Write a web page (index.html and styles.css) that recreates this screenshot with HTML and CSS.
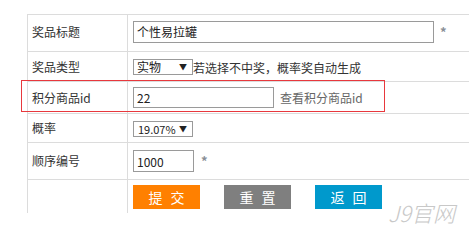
FILE: index.html
```html
<!DOCTYPE html>
<html lang="zh-CN">
<head>
<meta charset="utf-8">
<title>奖品编辑</title>
<link rel="stylesheet" href="styles.css">
</head>
<body>
<div class="page">
  <table class="form">
    <tr class="r1">
      <td class="lab">奖品标题</td>
      <td class="val"><input class="ipt w-title" type="text" value="个性易拉罐"><span class="req">*</span></td>
    </tr>
    <tr class="r2">
      <td class="lab">奖品类型</td>
      <td class="val"><span class="sel"><select><option>实物</option></select><span class="arrow">▼</span></span><span class="tip">若选择不中奖，概率奖自动生成</span></td>
    </tr>
    <tr class="r3">
      <td class="lab">积分商品id</td>
      <td class="val"><input class="ipt w-id" type="text" value="22"><a class="link">查看积分商品id</a></td>
    </tr>
    <tr class="r4">
      <td class="lab">概率</td>
      <td class="val"><span class="sel"><select class="num"><option>19.07%</option></select><span class="arrow">▼</span></span></td>
    </tr>
    <tr class="r5">
      <td class="lab">顺序编号</td>
      <td class="val"><input class="ipt w-num" type="text" value="1000"><span class="req req-num">*</span></td>
    </tr>
    <tr class="r6">
      <td class="lab"></td>
      <td class="val"><div class="btns"><button class="btn submit">提 交</button><button class="btn reset">重 置</button><button class="btn back">返 回</button></div></td>
    </tr>
  </table>
  <div class="mark"></div>
  <div class="watermark">J9官网</div>
</div>
</body>
</html>
```
FILE: styles.css
```css
html, body {
  margin: 0;
  padding: 0;
  background: #fff;
  overflow: hidden;
}
body {
  width: 469px;
  height: 232px;
  font-family: "Noto Sans CJK SC", sans-serif;
  font-size: 12px;
  color: #333;
}
.page {
  position: relative;
  padding: 14px 0 0 27px;
  height: 218px;
}
.form {
  border-collapse: separate;
  border-spacing: 0;
  width: 442px;
  table-layout: fixed;
}
.form td {
  border-top: 1px solid #dcdcdc;
  border-left: 1px solid #dcdcdc;
  padding: 0;
  vertical-align: middle;
  line-height: 16px;
}
.form td.lab {
  width: 95px;
  padding-left: 4px;
  white-space: nowrap;
}
.form td.val {
  padding-left: 5px;
  white-space: nowrap;
}
.r1 { height: 37px; }
.r2 { height: 30px; }
.r3 { height: 32px; }
.r4 { height: 29px; }
.r5 { height: 37px; }
.r6 { height: 34px; }
.r1 td { padding-bottom: 3px; }

.ipt {
  box-sizing: border-box;
  border: 1px solid #9a9a9a;
  font-family: "Noto Sans CJK SC", sans-serif;
  font-size: 12px;
  color: #222;
  padding: 0 3px;
  margin: 0;
  vertical-align: middle;
  background: #fff;
}
.w-title { width: 301px; height: 22px; }
.w-id { width: 141px; height: 21px; }
.w-num { width: 61px; height: 22px; }

.req {
  color: #8a8f96;
  font-size: 13px;
  font-weight: bold;
  margin-left: 6px;
  vertical-align: middle;
}
.req-num { margin-left: 7px; }

.sel {
  position: relative;
  display: inline-block;
  vertical-align: middle;
  width: 60px;
  height: 16px;
}
.sel select {
  -webkit-appearance: none;
  appearance: none;
  box-sizing: border-box;
  width: 60px;
  height: 16px;
  border: 1px solid #9a9a9a;
  border-radius: 0;
  background: #fff;
  font-family: "Noto Sans CJK SC", sans-serif;
  font-size: 12px;
  line-height: 14px;
  color: #222;
  padding: 0 0 0 3px;
  margin: 0;
  display: block;
}
.sel select.num {
  font-size: 11px;
  padding-left: 4px;
}
.sel .arrow {
  position: absolute;
  right: 6px;
  top: 3px;
  font-size: 8px;
  line-height: 10px;
  color: #222;
}
.tip {
  vertical-align: middle;
  color: #333;
}
.link {
  vertical-align: middle;
  margin-left: 6px;
  color: #666;
}

.btns {
  display: flex;
  gap: 24px;
  align-items: center;
}
.btn {
  width: 67px;
  height: 24px;
  border: 0;
  padding: 0;
  margin: 0;
  color: #fff;
  font-family: "Noto Sans CJK SC", sans-serif;
  font-size: 14px;
  word-spacing: 5px;
  line-height: 24px;
  cursor: pointer;
}
.submit { background: #ff8000; }
.reset { background: #7f7f7f; }
.back { background: #0099cc; }

.mark {
  position: absolute;
  left: 21px;
  top: 80px;
  width: 362px;
  height: 30px;
  border: 1px solid #e8383d;
}
.watermark {
  position: absolute;
  left: 388px;
  top: 198px;
  font-family: "Noto Sans CJK SC", sans-serif;
  font-size: 22px;
  font-style: italic;
  font-weight: 300;
  color: #c8c8c8;
  line-height: 28px;
}
```
